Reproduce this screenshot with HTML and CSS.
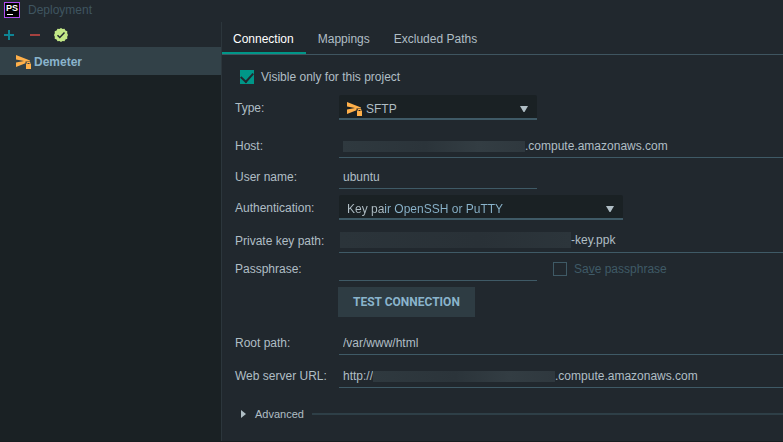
FILE: index.html
```html
<!DOCTYPE html>
<html lang="en">
<head>
    <meta charset="UTF-8">
    <meta name="viewport" content="width=device-width, initial-scale=1.0">
    <title>Deployment</title>
    <link rel="stylesheet" href="styles.css">
</head>
<body>
    <svg class="symbols" aria-hidden="true">
        <symbol id="icon-sftp" viewBox="0 0 16 16">
            <path fill="#ffb04a" d="M0 1 L14 6.5 L14 7.5 L9.5 7.5 L9.5 9.2 L0 13 L0 8.6 L8 7 L0 5.4 Z"/>
            <path fill="#ffb04a" d="M10 10h5v5h-5z"/>
            <path fill="none" stroke="#ffb04a" d="M11 10.5v-2h3v2"/>
        </symbol>
        <symbol id="icon-arrow" viewBox="0 0 8 6">
            <path fill="#b0bec5" d="M0 0h8L4.5 6h-1z"/>
        </symbol>
    </svg>

    <header class="titlebar">
        <svg class="app-logo" width="16" height="16" viewBox="0 0 16 16" aria-hidden="true">
            <rect x="0.5" y="0.5" width="15" height="15" fill="#000" stroke="#b04cf0"/>
            <text class="app-logo-text" x="2" y="9">PS</text>
            <path fill="#fff" d="M3 12h6v1H3z"/>
        </svg>
        <h1 class="title">Deployment</h1>
    </header>

    <div class="window">
        <aside class="sidebar">
            <div class="toolbar">
                <button type="button" class="tool" aria-label="Add">
                    <svg width="10" height="10" viewBox="0 0 10 10"><path stroke="#0e8595" stroke-width="2" d="M5 0v10M0 5h10"/></svg>
                </button>
                <button type="button" class="tool" aria-label="Remove">
                    <svg width="10" height="10" viewBox="0 0 10 10"><path stroke="#a5413f" stroke-width="2" d="M0 5h10"/></svg>
                </button>
                <button type="button" class="tool" aria-label="Use as default">
                    <svg width="14" height="14" viewBox="0 0 14 14">
                        <path fill="#c3e887" d="M7 0l1.6 1 1.9-.2.9 1.7 1.9.8-.1 2L14 7l-.8 1.7.1 2-1.9.8-.9 1.7-1.9-.2L7 14l-1.6-1-1.9.2-.9-1.7-1.9-.8.1-2L0 7l.8-1.7-.1-2 1.9-.8.9-1.7 1.9.2z"/>
                        <path fill="none" stroke="#21282e" stroke-width="1.5" d="M3.5 7.2l2.3 2.3 4.7-4.9"/>
                    </svg>
                </button>
            </div>
            <ul class="servers">
                <li class="server active">
                    <svg width="16" height="16"><use href="#icon-sftp"/></svg>
                    <span>Demeter</span>
                </li>
            </ul>
        </aside>

        <main class="panel">
            <nav class="tabs">
                <a href="#connection" class="tab active">Connection</a>
                <a href="#mappings" class="tab">Mappings</a>
                <a href="#excluded" class="tab">Excluded Paths</a>
            </nav>

            <form class="form">
                <label class="check">
                    <input type="checkbox" checked>
                    <span>Visible only for this project</span>
                </label>

                <div class="row">
                    <label for="type">Type:</label>
                    <div class="select">
                        <svg class="select-icon" width="16" height="16"><use href="#icon-sftp"/></svg>
                        <select id="type" class="with-icon">
                            <option>SFTP</option>
                        </select>
                        <svg class="select-arrow" width="8" height="6"><use href="#icon-arrow"/></svg>
                    </div>
                </div>

                <div class="row gap-large">
                    <label for="host">Host:</label>
                    <div class="field">
                        <span class="masked"></span>
                        <input type="text" id="host" value=".compute.amazonaws.com">
                    </div>
                </div>

                <div class="row">
                    <label for="user">User name:</label>
                    <div class="field short">
                        <input type="text" id="user" value="ubuntu">
                    </div>
                </div>

                <div class="row">
                    <label for="auth">Authentication:</label>
                    <div class="select wide">
                        <select id="auth" class="two-tone">
                            <option>Key pair OpenSSH or PuTTY</option>
                        </select>
                        <svg class="select-arrow" width="8" height="6"><use href="#icon-arrow"/></svg>
                    </div>
                </div>

                <div class="row gap-medium">
                    <label for="key">Private key path:</label>
                    <div class="field key">
                        <span class="masked dim"></span>
                        <input type="text" id="key" value="-key.ppk">
                    </div>
                </div>

                <div class="row gap-small">
                    <label for="passphrase">Passphrase:</label>
                    <div class="field short">
                        <input type="password" id="passphrase">
                    </div>
                    <label class="check disabled">
                        <input type="checkbox" disabled>
                        <span>Sa<u>v</u>e passphrase</span>
                    </label>
                </div>

                <button type="button" class="test-button">TEST CONNECTION</button>

                <div class="row gap-large">
                    <label for="root">Root path:</label>
                    <div class="field">
                        <input type="text" id="root" value="/var/www/html">
                    </div>
                </div>

                <div class="row gap-medium">
                    <label for="url">Web server URL:</label>
                    <div class="field">
                        <span>http://</span>
                        <span class="masked"></span>
                        <input type="text" id="url" value=".compute.amazonaws.com">
                    </div>
                </div>

                <details class="advanced">
                    <summary>
                        <svg width="6" height="8" viewBox="0 0 6 8"><path fill="#b0bec5" d="M0 0l5 4-5 4z"/></svg>
                        <span>Advanced</span>
                    </summary>
                </details>
            </form>
        </main>
    </div>
</body>
</html>
```

FILE: styles.css
```css
* {
    margin: 0;
    padding: 0;
    box-sizing: border-box;
}

body {
    min-height: 100vh;
    display: flex;
    flex-direction: column;
    background: #21282e;
    border-bottom: 1px solid #181e21;
    color: #b0bec5;
    font-family: "Liberation Sans", Arial, sans-serif;
    font-size: 12px;
    line-height: 16px;
}

input,
select,
button {
    font: inherit;
    color: inherit;
    border: none;
    outline: none;
    background: none;
    appearance: none;
}

svg {
    display: block;
    flex: none;
}

.symbols {
    position: absolute;
    width: 0;
    height: 0;
}

/* Title bar */
.titlebar {
    display: flex;
    align-items: center;
    gap: 8px;
    height: 22px;
    padding: 0 4px 2px;
}

.title {
    color: #3f5560;
    font-size: 12px;
    font-weight: 400;
}

.app-logo-text {
    fill: #fff;
    font-size: 9px;
    font-weight: 700;
}

.window {
    flex: 1;
    display: flex;
}

/* Sidebar */
.sidebar {
    width: 222px;
    flex: none;
    display: flex;
    flex-direction: column;
    border-right: 1px solid #2c363c;
}

.toolbar {
    display: flex;
    align-items: center;
    gap: 8px;
    height: 25px;
}

.tool {
    display: flex;
    align-items: center;
    justify-content: center;
    width: 18px;
    height: 18px;
    cursor: pointer;
}

.servers {
    flex: 1;
    background: #1a2124;
    list-style: none;
}

.server {
    display: flex;
    align-items: center;
    gap: 2px;
    height: 28px;
    padding: 2px 0 0 16px;
    font-weight: 700;
}

.server.active {
    background: #324148;
    color: #8ab4cc;
}

/* Tabs */
.panel {
    flex: 1;
    min-width: 0;
}

.tabs {
    display: flex;
    gap: 1px;
    height: 33px;
    border-bottom: 1px solid #3f5560;
}

.tab {
    padding: 9px 12px 0 11px;
    color: #b0bec5;
    text-decoration: none;
    border-bottom: 2px solid transparent;
}

.tab.active {
    color: #fff;
    border-bottom-color: #009688;
}

/* Form */
.form {
    display: flex;
    flex-direction: column;
    align-items: stretch;
    padding: 14px 0 0 13px;
}

.check {
    display: flex;
    align-items: center;
    gap: 7px;
}

.check input {
    width: 14px;
    height: 14px;
    border: 1px solid #3f5a66;
}

.check input:checked {
    display: flex;
    justify-content: center;
    border: none;
    background: #009688;
}

.check input:checked::after {
    content: "";
    width: 6px;
    height: 10px;
    border: solid #21282e;
    border-width: 0 2px 2px 0;
    transform: rotate(42deg);
}

.form > .check {
    padding-left: 5px;
    margin-bottom: 4px;
}

.check.disabled {
    margin-left: 16px;
    color: #3f5a66;
}

.row {
    display: grid;
    grid-template-columns: 104px 1fr;
    align-items: center;
    height: 25px;
    margin-top: 6px;
}

.row > label {
    padding-top: 1px;
}

.row:has(.check) {
    grid-template-columns: 104px 198px 1fr;
}

.row.gap-small {
    margin-top: 3px;
}

.row.gap-medium {
    margin-top: 8px;
}

.row.gap-large {
    margin-top: 13px;
}

.field {
    display: flex;
    align-items: center;
    height: 25px;
    padding: 2px 0 0 4px;
    border-bottom: 1px solid #3f5a66;
}

.field input {
    flex: 1;
    min-width: 0;
}

.field.short {
    width: 198px;
}

.field.key {
    padding: 0 0 0 1px;
}

.masked {
    flex: none;
    width: 182px;
    height: 11px;
    background: linear-gradient(to right, #2f393f, #2b343a 45%, #333d43 75%, #2f383e);
}

.masked.dim {
    width: 231px;
    height: 16px;
    background: linear-gradient(to right, #2b343a, #293137 60%, #2c353b);
}

.select {
    position: relative;
    width: 198px;
    height: 25px;
    background: #1a2124;
    border-bottom: 2px solid #3f5a66;
    border-radius: 2px 2px 0 0;
}

.select.wide {
    width: 284px;
}

.select select {
    width: 100%;
    height: 100%;
    padding: 4px 24px 0 8px;
}

.select select.with-icon {
    padding-left: 27px;
}

.select .two-tone {
    background: linear-gradient(to right, #b0bec5 46px, #8ab4cc 46px);
    background-clip: text;
    color: transparent;
}

.select-icon {
    position: absolute;
    left: 8px;
    top: 6px;
}

.select-arrow {
    position: absolute;
    right: 9px;
    top: 11px;
    pointer-events: none;
}

.test-button {
    align-self: flex-start;
    height: 30px;
    margin: 6px 0 0 103px;
    padding: 0 15px;
    background: #2e3c43;
    color: #8ab4cc;
    font-family: Roboto, "Liberation Sans", sans-serif;
    font-weight: 700;
    cursor: pointer;
}

.advanced {
    margin-top: 18px;
}

.advanced summary {
    display: flex;
    align-items: center;
    padding-left: 6px;
    gap: 8px;
    font-size: 11px;
    list-style: none;
    cursor: pointer;
}

.advanced summary::after {
    content: "";
    flex: 1;
    height: 2px;
    background: #2e3f47;
}
```
